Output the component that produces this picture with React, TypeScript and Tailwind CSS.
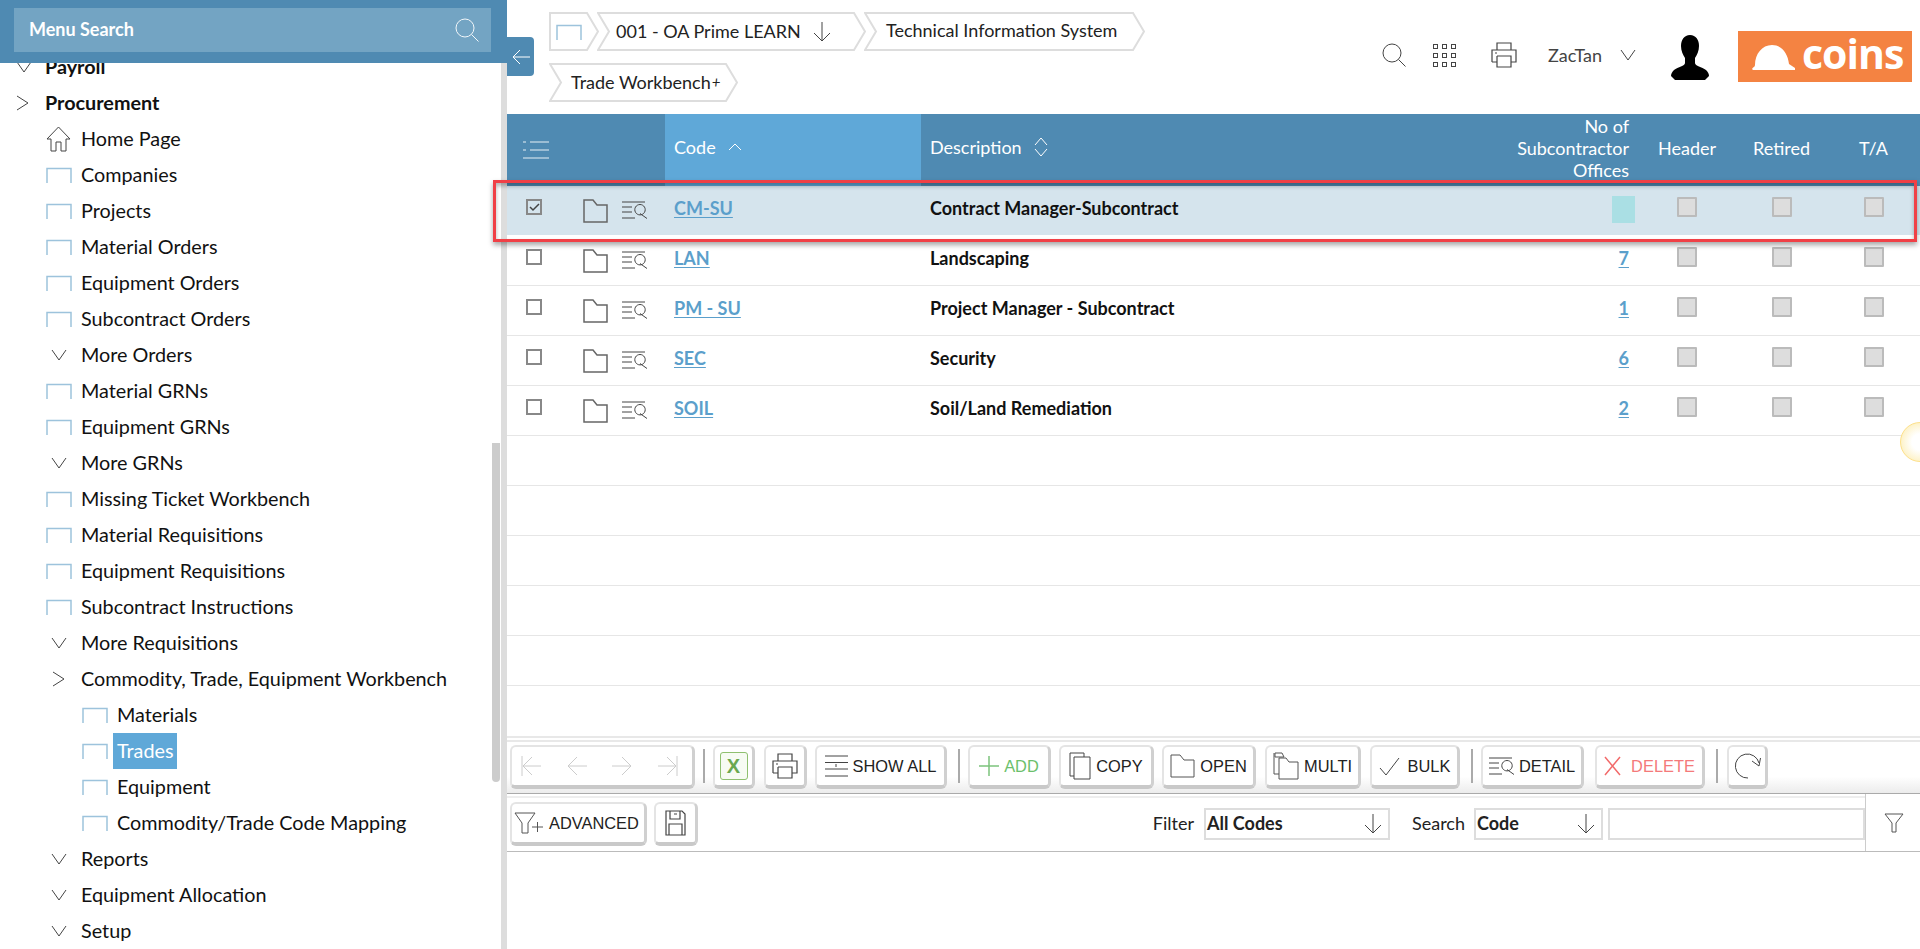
import React from "react";

type MenuItem = { label: string; level: number; icon?: "open" | "closed" | "home" | "page"; bold?: boolean; active?: boolean };

const menu: MenuItem[] = [
    { label: "Payroll", level: 0, icon: "closed", bold: true },
    { label: "Procurement", level: 0, icon: "open", bold: true },
    { label: "Home Page", level: 1, icon: "home" },
    { label: "Companies", level: 1, icon: "page" },
    { label: "Projects", level: 1, icon: "page" },
    { label: "Material Orders", level: 1, icon: "page" },
    { label: "Equipment Orders", level: 1, icon: "page" },
    { label: "Subcontract Orders", level: 1, icon: "page" },
    { label: "More Orders", level: 1, icon: "closed" },
    { label: "Material GRNs", level: 1, icon: "page" },
    { label: "Equipment GRNs", level: 1, icon: "page" },
    { label: "More GRNs", level: 1, icon: "closed" },
    { label: "Missing Ticket Workbench", level: 1, icon: "page" },
    { label: "Material Requisitions", level: 1, icon: "page" },
    { label: "Equipment Requisitions", level: 1, icon: "page" },
    { label: "Subcontract Instructions", level: 1, icon: "page" },
    { label: "More Requisitions", level: 1, icon: "closed" },
    { label: "Commodity, Trade, Equipment Workbench", level: 1, icon: "open" },
    { label: "Materials", level: 2, icon: "page" },
    { label: "Trades", level: 2, icon: "page", active: true },
    { label: "Equipment", level: 2, icon: "page" },
    { label: "Commodity/Trade Code Mapping", level: 2, icon: "page" },
    { label: "Reports", level: 1, icon: "closed" },
    { label: "Equipment Allocation", level: 1, icon: "closed" },
    { label: "Setup", level: 1, icon: "closed" },
];

const rows = [
    { code: "CM-SU", description: "Contract Manager-Subcontract", offices: "", selected: true },
    { code: "LAN", description: "Landscaping", offices: "7" },
    { code: "PM - SU", description: "Project Manager - Subcontract", offices: "1" },
    { code: "SEC", description: "Security", offices: "6" },
    { code: "SOIL", description: "Soil/Land Remediation", offices: "2" },
];

const grid = "grid grid-cols-[158px_256px_549px_170px_94px_95px_1fr]";

function Line({ w, h, d, color = "#555", width = 1, className = "" }: { w: number; h: number; d: string; color?: string; width?: number; className?: string }) {
    return (
        <svg width={w} height={h} viewBox={`0 0 ${w} ${h}`} fill="none" stroke={color} strokeWidth={width} className={`shrink-0 ${className}`}>
            <path d={d} />
        </svg>
    );
}

const PageIcon = () => <Line w={26} h={16} color="#9dc3dc" width={1.5} d="M1 16V1.5H25V16" />;
const HomeIcon = () => <Line w={25} h={26} color="#444" d="M1 13L12.5 1L24 13H20V25H15V16H10V25H5V13Z" />;
const ChevDown = () => <Line w={16} h={12} color="#444" d="M1 1L8 11L15 1" />;
const ChevRight = () => <Line w={13} h={16} color="#444" d="M1 1L12 8L1 15" />;
const FolderIcon = () => <Line w={25} h={24} color="#666" width={1.5} d="M1 23V1H10L14 6H24V23Z" />;
const DetailIcon = () => <Line w={25} h={18} color="#444" d="M0 1H23M0 6H10M0 11H10M0 17H13M18 3.5a5.2 5.2 0 1 0 .01 0M18 12.5L25 17.5" />;
const PrintIcon = () => <Line w={26} h={26} color="#444" width={1.2} d="M6 8V1H20V8M1 20V8H25V20H20M1 20H6M6 14H20V25H6V14M4 11H6" />;
const SearchIcon = ({ color = "#444", size = 24 }: { color?: string; size?: number }) => (
    <svg width={size} height={size} viewBox="0 0 24 24" fill="none" stroke={color} strokeWidth={1} className="shrink-0">
        <circle cx="10" cy="10" r="9" />
        <path d="M16.5 16.5L23.5 23.5" />
    </svg>
);
const ArrowDown = () => <Line w={18} h={20} color="#444" d="M9 0V19M1 11L9 19L17 11" />;
const Funnel = () => <Line w={20} h={20} color="#555" d="M1 1H19L12 10V19H8V10Z" />;

function Crumb({ width, first, children, className = "" }: { width: number; first?: boolean; children: React.ReactNode; className?: string }) {
    const shape = first
        ? `M1 1H${width - 12}L${width - 1} 19.5L${width - 12} 38H1Z`
        : `M1 1H${width - 12}L${width - 1} 19.5L${width - 12} 38H1L12 19.5Z`;
    return (
        <div className={`relative h-[39px] flex items-center ${className}`} style={{ width }}>
            <svg width={width} height={39} className="absolute inset-0" fill="white" stroke="#ddd" strokeWidth={2}>
                <path d={shape} />
            </svg>
            <div className="relative flex items-center text-[18px] text-[#222]">{children}</div>
        </div>
    );
}

function Btn({ children, className = "" }: { children: React.ReactNode; className?: string }) {
    return (
        <div className={`flex items-center justify-center gap-[5px] shrink-0 rounded-[6px] bg-white border-2 border-[#e4e4e4] border-r-[3px] border-r-[#d0d0d0] border-b-[4px] border-b-[#c9c9c9] font-['Liberation_Sans',sans-serif] text-[16.4px] ${className}`}>
            {children}
        </div>
    );
}

const Sep = ({ className = "" }: { className?: string }) => <div className={`w-[2px] h-[34px] bg-[#aaa] shrink-0 ${className}`} />;

function Sidebar() {
    return (
        <aside className="w-[507px] h-full shrink-0 flex flex-col overflow-hidden">
            <div className="relative z-10 h-[63px] shrink-0 bg-[#4f8ab2] pt-[8px] pl-[14px] pr-[16px]">
                <div className="h-[44px] bg-[#73a4c3] flex items-center justify-between pl-[15px] pr-[12px]">
                    <span className="text-white font-bold text-[18px] mb-[1px]">Menu Search</span>
                    <SearchIcon color="#f2f7fa" />
                </div>
            </div>
            <div className="-mt-[14px] flex flex-1 min-h-0">
                <nav className="flex-1 min-w-0 text-[19.8px] text-[#111]">
                    {menu.map((m) => (
                        <MenuRow key={m.label + m.level} item={m} />
                    ))}
                </nav>
                <div className="w-[9px] shrink-0 pt-[394px]">
                    <div className="h-[339px] w-[8px] bg-[#ccc] rounded-b-[4px]" />
                </div>
                <div className="w-[6px] shrink-0 bg-[#ddd]" />
            </div>
        </aside>
    );
}

function MenuRow({ item }: { item: MenuItem }) {
    if (item.level === 0) {
        return (
            <div className="h-[36px] flex items-center pl-[16px]">
                <div className="w-[29px] flex">{item.icon === "closed" ? <ChevDown /> : <ChevRight />}</div>
                <span className="font-bold">{item.label}</span>
            </div>
        );
    }
    const icon = item.icon === "home" ? <HomeIcon /> : item.icon === "page" ? <PageIcon /> : item.icon === "closed" ? <ChevDown /> : <ChevRight />;
    return (
        <div className={`h-[36px] flex items-center ${item.level === 1 ? "pl-[46px]" : "pl-[82px]"}`}>
            <div className={`flex justify-center ${item.level === 1 ? "w-[35px] pr-[10px]" : "w-[31px] pr-[5px]"}`}>{icon}</div>
            <span className={item.active ? "bg-[#5fa8d8] text-white h-[36px] flex items-center px-[4px]" : item.level === 2 ? "px-[4px]" : ""}>{item.label}</span>
        </div>
    );
}

function TopBar() {
    return (
        <div className="h-[114px] shrink-0 flex justify-between">
            <div className="pl-[42px] pt-[12px] flex flex-col gap-[12px]">
                <div className="flex">
                    <Crumb width={50} first>
                        <span className="ml-[7px]"><PageIcon /></span>
                    </Crumb>
                    <Crumb width={269} className="-ml-[2px]">
                        <span className="ml-[19px] mb-[1px]">001 - OA Prime LEARN</span>
                        <span className="ml-[12px]"><ArrowDown /></span>
                    </Crumb>
                    <Crumb width={281} className="-ml-[2px]">
                        <span className="ml-[22px] mb-[2px]">Technical Information System</span>
                    </Crumb>
                </div>
                <Crumb width={189}>
                    <span className="ml-[22px]">Trade Workbench</span>
                    <span className="ml-[1px] text-[15px] italic">+</span>
                </Crumb>
            </div>
            <div className="flex items-start pt-[31px] pr-[8px]">
                <div className="flex items-center h-[48px]">
                    <SearchIcon />
                    <div className="ml-[27px] grid grid-cols-3 gap-x-[4px] gap-y-[4px]">
                        {[...Array(9).keys()].map((i) => (
                            <div key={i} className="w-[5px] h-[5px] border border-[#444]" />
                        ))}
                    </div>
                    <span className="ml-[35px]"><PrintIcon /></span>
                    <span className="ml-[31px] text-[18px] text-[#444]">ZacTan</span>
                    <span className="ml-[18px]"><ChevDown /></span>
                </div>
                <svg width={40} height={45} viewBox="0 0 40 45" className="ml-[34px] mt-[4px] shrink-0" fill="#000">
                    <path d="M20 0C26 0 29 5 29 11C29 16 27 20 25 23V28C25 31 32 32 36 35C38 37 39 39 39 41L35 45H5L1 41C1 39 2 37 4 35C8 32 15 31 15 28V23C13 20 11 16 11 11C11 5 14 0 20 0Z" />
                </svg>
                <div className="ml-[28px] w-[174px] h-[51px] bg-[#f48342] flex items-center shrink-0 pl-[14px]">
                    <svg width={44} height={26} viewBox="0 0 44 26" fill="white" className="shrink-0">
                        <path d="M0 25C1 23 3 23 3 21C3 10 10 1 20 1C30 1 36 10 37 20L43 24V26H1Z" />
                    </svg>
                    <span className="ml-[6px] text-white font-['Open_Sans',sans-serif] font-bold text-[41px] leading-none pb-[7px] tracking-[-1px]">coins</span>
                </div>
            </div>
        </div>
    );
}

function TableHead() {
    return (
        <div className={`${grid} h-[72px] bg-[#4f8ab2] text-white text-[18px]`}>
            <div className="flex items-center pl-[16px]">
                <Line w={26} h={18} color="#e8f0f5" d="M0 1H3M7 1H26M7 9H26M0 9H3M0 17H26" />
            </div>
            <div className="bg-[#5fa8d8] flex items-center pl-[9px]">
                <span className="mb-[6px]">Code</span>
                <Line w={14} h={8} color="white" className="ml-[12px] mb-[6px]" d="M1 7L7 1L13 7" />
            </div>
            <div className="flex items-center pl-[9px]">
                <span className="mb-[6px]">Description</span>
                <Line w={14} h={20} color="white" className="ml-[12px] mb-[6px]" d="M1 8L7 1L13 8M1 12L7 19L13 12" />
            </div>
            <div className="flex items-center justify-end pr-[11px] text-right leading-[22px]">
                <span className="mb-[5px]">No of<br />Subcontractor<br />Offices</span>
            </div>
            <div className="flex items-center justify-center"><span className="mb-[3px]">Header</span></div>
            <div className="flex items-center justify-center"><span className="mb-[3px]">Retired</span></div>
            <div className="flex items-center justify-center pr-[2px]"><span className="mb-[3px]">T/A</span></div>
        </div>
    );
}

const Disabled = ({ className = "" }: { className?: string }) => <div className={`w-[20px] h-[20px] bg-[#ddd] border-2 border-[#bbb] rounded-[1px] mb-[7px] ${className}`} />;

function TableRow({ code, description, offices, selected }: { code: string; description: string; offices: string; selected?: boolean }) {
    return (
        <div className={`${grid} h-[50px] text-[18px] border-b ${selected ? "bg-[#d5e4ed] border-white" : "bg-white border-[#e6e6e6]"}`}>
            <div className="flex items-center pl-[19px]">
                <div className="w-[16px] h-[16px] border-2 border-[#888] mb-[7px] flex items-center justify-center shrink-0">
                    {selected && <Line w={11} h={9} color="#444" width={1.5} d="M1 4L4 7L10 1" />}
                </div>
                <span className="ml-[41px]"><FolderIcon /></span>
                <span className="ml-[14px] mb-[2px]"><DetailIcon /></span>
            </div>
            <div className="flex items-center pl-[9px]">
                <span className="mb-[4px] font-bold text-[#5b9fcb] underline underline-offset-2">{code}</span>
            </div>
            <div className="flex items-center pl-[9px] font-bold text-[#111]"><span className="mb-[4px]">{description}</span></div>
            <div className="flex items-center justify-end pr-[11px] font-bold text-[#5b9fcb]">
                {selected ? <div className="w-[23px] h-[27px] bg-[#aadfe4] -mr-[6px] mb-[3px]" /> : <span className="mb-[4px] underline underline-offset-2">{offices}</span>}
            </div>
            <div className="flex items-center justify-center"><Disabled /></div>
            <div className="flex items-center justify-center"><Disabled /></div>
            <div className="flex items-center justify-center pr-[2px]"><Disabled /></div>
        </div>
    );
}

function Toolbar() {
    return (
        <div className="h-[58px] shrink-0 border-t-2 border-[#e8e8e8] border-b border-b-[#aaa] bg-linear-to-b from-white from-70% to-[#ececec] text-[#222]">
            <div className="h-[2px] mt-[2px] bg-[#e8e8e8]" />
            <div className="flex items-start pl-[3px] pt-[3px]">
                <Btn className="w-[185px] h-[44px] gap-[25px] pr-[5px]">
                    <Line w={20} h={22} color="#ccc" d="M1 1V21M20 11H2M11 2L2 11L11 20" />
                    <Line w={21} h={22} color="#ccc" d="M21 11H2M11 2L2 11L11 20" />
                    <Line w={21} h={22} color="#ccc" d="M0 11H19M10 2L19 11L10 20" />
                    <Line w={20} h={22} color="#ccc" d="M19 1V21M0 11H18M9 2L18 11L9 20" />
                </Btn>
                <Sep className="ml-[8px] mt-[4px]" />
                <Btn className="ml-[8px] w-[42px] h-[44px]">
                    <div className="w-[28px] h-[28px] rounded-[3px] border border-[#8fc06f] bg-[#f7fbf3] flex items-center justify-center text-[#6aa84f] font-bold text-[20px]">X</div>
                </Btn>
                <Btn className="ml-[9px] w-[43px] h-[44px]"><PrintIcon /></Btn>
                <Btn className="ml-[8px] w-[132px] h-[44px]">
                    <Line w={23} h={22} color="#444" d="M0 1H23M0 7.5H23M0 14H23M0 21H23M11 9V12" />
                    SHOW ALL
                </Btn>
                <Sep className="ml-[11px] mt-[4px]" />
                <Btn className="ml-[8px] w-[83px] h-[44px] text-[#6cbf6c]">
                    <Line w={20} h={22} color="#7cc47c" width={1.5} d="M10 1V21M0 11H20" />
                    ADD
                </Btn>
                <Btn className="ml-[8px] w-[95px] h-[44px]">
                    <Line w={22} h={28} color="#444" d="M15 5V1H1V24H5M5 5H21V27H5Z" />
                    COPY
                </Btn>
                <Btn className="ml-[8px] w-[94px] h-[44px]">
                    <Line w={25} h={24} color="#555" d="M1 23V1H10L14 6H24V23Z" />
                    OPEN
                </Btn>
                <Btn className="ml-[9px] w-[96px] h-[44px] gap-[2px]">
                    <Line w={26} h={28} color="#555" d="M6 5H2V1H9L11 5H6M1 1V22H6M6 27V6H13L16 10H25V27Z" />
                    MULTI
                </Btn>
                <Btn className="ml-[9px] w-[90px] h-[44px] gap-[8px]">
                    <Line w={21} h={19} color="#444" d="M1 11L7 18L20 1" />
                    BULK
                </Btn>
                <Sep className="ml-[11px] mt-[4px]" />
                <Btn className="ml-[8px] w-[103px] h-[44px]"><DetailIcon />DETAIL</Btn>
                <Btn className="ml-[11px] w-[110px] h-[44px] gap-[10px] text-[#f47a7a]">
                    <Line w={17} h={20} color="#f26a6a" width={1.5} d="M1 1L16 19M16 1L1 19" />
                    DELETE
                </Btn>
                <Sep className="ml-[11px] mt-[4px]" />
                <Btn className="ml-[9px] w-[41px] h-[44px]">
                    <Line w={28} h={28} color="#444" d="M15 26a12 12 0 1 1 11-15M19 9L26 14L27.5 6" />
                </Btn>
            </div>
        </div>
    );
}

function FilterBar() {
    return (
        <div className="h-[58px] shrink-0 border-b border-[#bbb] flex text-[18px] text-[#222]">
            <div className="flex-1 min-w-0">
                <div className="h-[2px] mt-[2px] bg-[#eee]" />
                <div className="flex items-center pl-[3px] pt-[4px]">
                    <Btn className="w-[137px] h-[44px] gap-0 justify-start pl-[2px]">
                        <Line w={30} h={22} color="#555" d="M1 1H21L14 11V21H8V11ZM18 15H29M23.5 10V20" />
                        ADVANCED
                    </Btn>
                    <Btn className="ml-[7px] w-[44px] h-[44px]">
                        <Line w={21} h={26} color="#444" width={1.2} d="M1 1H17L20 4V25H1ZM5 1V9H15V1M4 14H17V25H4ZM9 4H12" />
                    </Btn>
                    <span className="ml-auto mb-[2px]">Filter</span>
                    <div className="ml-[10px] w-[186px] h-[32px] border-2 border-[#ddd] flex items-center justify-between pl-[1px] pr-[6px] font-bold">
                        <span className="mb-[2px]">All Codes</span><ArrowDown />
                    </div>
                    <span className="ml-[22px] mb-[2px]">Search</span>
                    <div className="ml-[9px] w-[129px] h-[32px] border-2 border-[#ddd] flex items-center justify-between pl-[1px] pr-[6px] font-bold">
                        <span className="mb-[2px]">Code</span><ArrowDown />
                    </div>
                    <div className="ml-[5px] w-[257px] h-[32px] border-2 border-[#ddd]" />
                </div>
            </div>
            <div className="w-[55px] shrink-0 border-l border-[#ccc] flex items-center justify-center pt-[1px] pl-[2px]"><Funnel /></div>
        </div>
    );
}

export default function App() {
    return (
        <div className="relative w-[1920px] h-[949px] flex overflow-hidden bg-white font-['Lato',sans-serif]">
            <Sidebar />
            <main className="relative flex-1 min-w-0 flex flex-col">
                <TopBar />
                <div className="h-[622px] shrink-0">
                    <TableHead />
                    {rows.map((r) => (
                        <TableRow key={r.code} {...r} />
                    ))}
                    {[...Array(5).keys()].map((i) => (
                        <div key={i} className="h-[50px] border-b border-[#e6e6e6]" />
                    ))}
                </div>
                <Toolbar />
                <FilterBar />
                {/* back tab */}
                <div className="absolute left-0 top-[37px] w-[27px] h-[39px] bg-[#4f8ab2] rounded-r-[4px] flex items-center justify-center">
                    <Line w={18} h={16} color="white" d="M18 8H1M8 1L1 8L8 15" />
                </div>
                {/* red annotation box */}
                <div className="absolute -left-[14px] top-[180px] w-[1424px] h-[62px] border-[3px] border-[#f04046] shadow-[0_3px_5px_rgba(0,0,0,0.35),inset_0_3px_4px_rgba(0,0,0,0.3)] z-20" />
                {/* helper orb */}
                <div className="absolute left-[1393px] top-[422px] w-[40px] h-[40px] rounded-full border border-[#fde08a] bg-radial from-white from-30% to-[#fde9a0]" />
            </main>
        </div>
    );
}
